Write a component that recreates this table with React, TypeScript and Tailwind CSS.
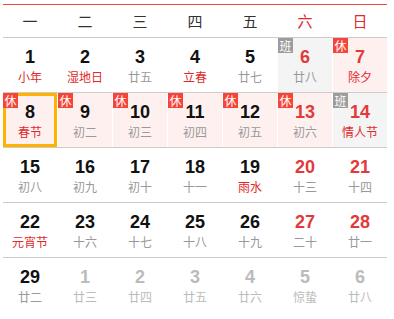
import React from "react";

type Cell = {
  d: number;
  l: string;
  redNum?: boolean;
  redLunar?: boolean;
  badge?: "休" | "班";
  today?: boolean;
  faded?: boolean;
};

const weeks: Cell[][] = [
  [
    { d: 1, l: "小年", redLunar: true },
    { d: 2, l: "湿地日", redLunar: true },
    { d: 3, l: "廿五" },
    { d: 4, l: "立春", redLunar: true },
    { d: 5, l: "廿七" },
    { d: 6, l: "廿八", redNum: true, badge: "班" },
    { d: 7, l: "除夕", redNum: true, redLunar: true, badge: "休" },
  ],
  [
    { d: 8, l: "春节", redLunar: true, badge: "休", today: true },
    { d: 9, l: "初二", badge: "休" },
    { d: 10, l: "初三", badge: "休" },
    { d: 11, l: "初四", badge: "休" },
    { d: 12, l: "初五", badge: "休" },
    { d: 13, l: "初六", redNum: true, badge: "休" },
    { d: 14, l: "情人节", redNum: true, redLunar: true, badge: "班" },
  ],
  [
    { d: 15, l: "初八" },
    { d: 16, l: "初九" },
    { d: 17, l: "初十" },
    { d: 18, l: "十一" },
    { d: 19, l: "雨水", redLunar: true },
    { d: 20, l: "十三", redNum: true },
    { d: 21, l: "十四", redNum: true },
  ],
  [
    { d: 22, l: "元宵节", redLunar: true },
    { d: 23, l: "十六" },
    { d: 24, l: "十七" },
    { d: 25, l: "十八" },
    { d: 26, l: "十九" },
    { d: 27, l: "二十", redNum: true },
    { d: 28, l: "廿一", redNum: true },
  ],
  [
    { d: 29, l: "廿二" },
    { d: 1, l: "廿三", faded: true },
    { d: 2, l: "廿四", faded: true },
    { d: 3, l: "廿五", faded: true },
    { d: 4, l: "廿六", faded: true },
    { d: 5, l: "惊蛰", faded: true },
    { d: 6, l: "廿八", faded: true },
  ],
];

const heads = ["一", "二", "三", "四", "五", "六", "日"];

function DayCell({ c }: { c: Cell }) {
  const bg =
    c.badge === "休" ? "bg-[#fff0f0]" : c.badge === "班" ? "bg-[#f4f4f4]" : "bg-white";
  const numColor = c.faded
    ? "text-[#bbbbbb]"
    : c.redNum
    ? "text-[#e23a3a]"
    : "text-[#111111]";
  const lunarColor = c.faded
    ? "text-[#bbbbbb]"
    : c.redLunar
    ? "text-[#e02a2a]"
    : "text-[#999999]";
  return (
    <div className={`relative h-[54px] ${bg} flex flex-col items-center justify-center`}>
      {c.today && (
        <div className="absolute inset-0 border-[3px] border-[#ffb300]" />
      )}
      {c.badge && (
        <div
          className={`absolute left-0 top-0 w-[15px] h-[15px] flex items-center justify-center text-[12px] leading-none text-white ${
            c.badge === "休" ? "bg-[#f5453a]" : "bg-[#9c9c9c]"
          }`}
        >
          {c.badge}
        </div>
      )}
      <div
        className={`relative mt-[2px] text-[18px] leading-[20px] font-bold ${numColor} [font-family:'Liberation_Sans',Arial,sans-serif]`}
      >
        {c.d}
      </div>
      <div className={`relative mt-[2px] text-[12px] leading-[16px] ${lunarColor}`}>
        {c.l}
      </div>
    </div>
  );
}

export default function App() {
  return (
    <div className="bg-white w-[394px] h-[319px] pl-[3px] pt-[4px] [font-family:'Noto_Sans_CJK_SC','Liberation_Sans',sans-serif]">
      <div className="w-[384px] border-t border-[#f0483c]">
        <div className="grid grid-cols-[repeat(7,54px)] gap-x-px h-[33px] items-center border-b border-[#cccccc]">
          {heads.map((h, i) => (
            <div
              key={h}
              className={`text-center text-[15px] ${i >= 5 ? "text-[#e02a2a]" : "text-[#333333]"}`}
            >
              {h}
            </div>
          ))}
        </div>
        {weeks.map((w, wi) => (
          <div
            key={wi}
            className={`grid grid-cols-[repeat(7,54px)] gap-x-px ${
              wi < weeks.length - 1 ? "border-b border-[#cccccc]" : ""
            }`}
          >
            {w.map((c, ci) => (
              <DayCell key={ci} c={c} />
            ))}
          </div>
        ))}
      </div>
    </div>
  );
}
